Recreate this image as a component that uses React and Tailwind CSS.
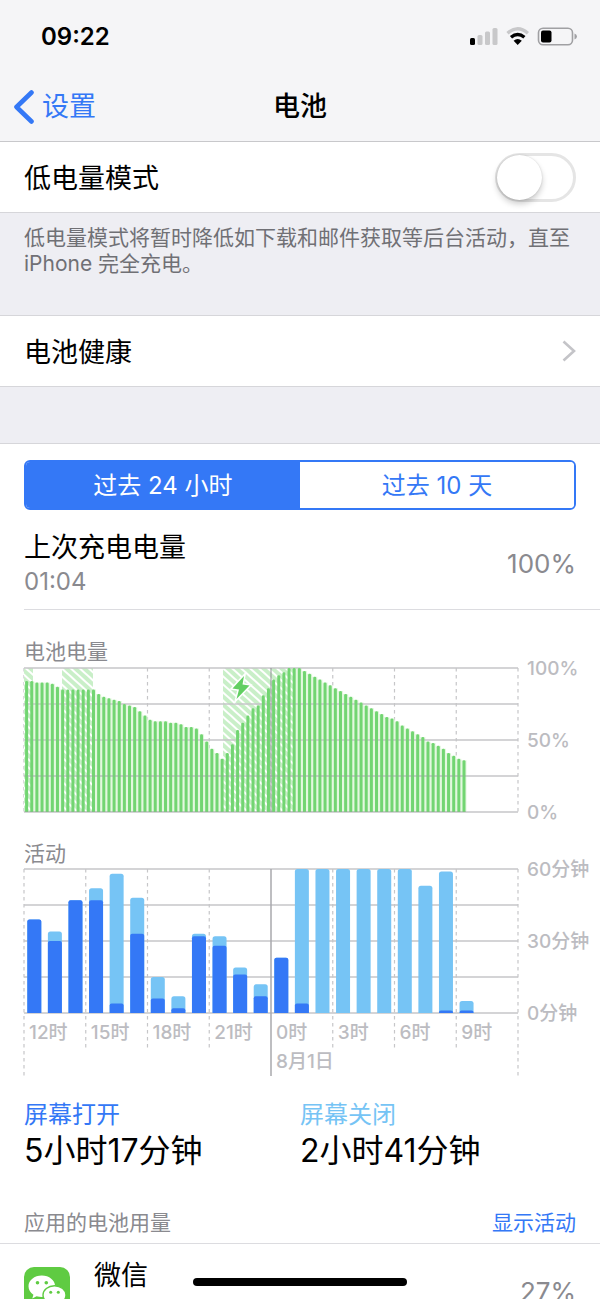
import React, { useState } from "react";

const FONT =
  "font-['Inter','Noto_Sans_CJK_SC',sans-serif]";

const PLOT_W = 494;
const PLOT_H = 144;
const HOUR_W = PLOT_W / 24;

// Charge level in percent, one value per quarter of an hour.
const LEVELS = [
  91, 91, 90, 90, 90, 89, 87, 85, 85, 85, 85, 85, 85, 85, 82, 80, 79, 78, 77,
  75, 74, 73, 70, 67, 64, 63, 63, 63, 62, 62, 61, 59, 59, 58, 54, 49, 44, 41,
  37, 41, 47, 57, 62, 67, 72, 74, 81, 86, 92, 95, 97, 100, 100, 100, 98, 96,
  94, 92, 90, 88, 86, 84, 82, 80, 78, 76, 74, 72, 70, 68, 66, 65, 63, 60, 58,
  56, 54, 52, 49, 48, 46, 44, 41, 39, 37, 36,
];

// Charging periods as [start, end] along the plot width.
const CHARGING = [
  [0, 9],
  [38, 69],
  [199, 269],
];

// Minutes per hour: [total, screen on].
const ACTIVITY = [
  [39, 39], [34, 30], [47, 47], [52, 47], [58, 4], [48, 33], [15, 6], [7, 2],
  [33, 32], [32, 28], [19, 16], [12, 7], [23, 23], [60, 4], [60, 0], [60, 0],
  [60, 0], [60, 0], [60, 0], [53, 0], [59, 1], [5, 1],
];

const HOURS = ["12时", "15时", "18时", "21时", "0时", "3时", "6时", "9时"];

function topRounded(x, y, w, h, r) {
  const q = Math.min(r, h);
  return `M${x} ${y + h}V${y + q}Q${x} ${y} ${x + q} ${y}H${x + w - q}Q${x + w} ${y} ${x + w} ${y + q}V${y + h}Z`;
}

function GridRows() {
  return [0, 1, 2, 3, 4].map((i) => (
    <line key={i} x1="0" x2={PLOT_W} y1={i * 36} y2={i * 36} stroke="#c6c6c8" strokeWidth="1.3" />
  ));
}

function GridColumns({ inner, outer }) {
  return [0, 1, 2, 3, 4, 5, 6, 7, 8].map((i) => {
    const x = (i * PLOT_W) / 8;
    if (i === 4) return null;
    return (
      <line
        key={i}
        x1={x}
        x2={x}
        y1="0"
        y2={i === 0 || i === 8 ? outer : inner}
        stroke="#c6c6c8"
        strokeWidth="1.2"
        strokeDasharray="3.5 3.5"
      />
    );
  });
}

function AxisLabels({ labels }) {
  return labels.map((t, i) => (
    <text key={t} x="503" y={i * 72 + 7} className="fill-[#bcbcc1] text-[19px] font-medium">
      {t}
    </text>
  ));
}

function BatteryChart() {
  const step = PLOT_W / 96;
  const y = (p) => PLOT_H * (1 - p / 100);
  const area =
    LEVELS.map((p, i) => `${i ? "L" : "M"}${i * step} ${y(p)}H${(i + 1) * step}`).join("") +
    `V${PLOT_H}H0Z`;
  return (
    <svg viewBox="0 0 576 144" className="block w-full overflow-visible" role="img" aria-label="电池电量">
      <defs>
        <pattern id="hatch" width="6" height="6" patternUnits="userSpaceOnUse" patternTransform="rotate(-48)">
          <rect width="6" height="6" fill="#c9efc8" />
          <rect width="2" height="6" fill="#ffffff" />
        </pattern>
      </defs>
      <GridColumns inner={144} outer={144} />
      <path d={area} fill="#e3f8df" />
      {CHARGING.map(([a, b]) => (
        <rect key={a} x={a} y="0" width={b - a} height={PLOT_H} fill="url(#hatch)" />
      ))}
      <GridRows />
      {LEVELS.map((p, i) => (
        <path
          key={i}
          d={topRounded(i * step + 1.1, y(p), 3, PLOT_H - y(p), 1.4)}
          fill="#72d572"
        />
      ))}
      <g stroke="#9c9ca0" strokeOpacity="0.25" strokeWidth="1">
        <line x1="0" x2="442" y1="108" y2="108" />
        <line x1="0" x2="442" y1="143.5" y2="143.5" />
      </g>
      <line x1="247" x2="247" y1="0" y2="144" stroke="#8e8e93" strokeOpacity="0.65" strokeWidth="1.5" />
      <path
        d="M220 8L208.500 20.500L215 21.500L212.500 31L225.500 17.500L218.500 16.500Z"
        fill="#62cf62"
        stroke="#ffffff"
        strokeWidth="3"
        paintOrder="stroke"
      />
      <AxisLabels labels={["100%", "50%", "0%"]} />
    </svg>
  );
}

function ActivityChart() {
  const h = (m) => (PLOT_H * m) / 60;
  return (
    <svg viewBox="0 0 576 207" className="block w-full overflow-visible" role="img" aria-label="活动">
      <GridRows />
      <GridColumns inner={180} outer={207} />
      {ACTIVITY.map(([total, on], i) => {
        const x = i * HOUR_W + 3.3;
        return (
          <g key={i}>
            <path d={topRounded(x, PLOT_H - h(total), 14, h(total), 2.5)} fill="#76c4f5" />
            {on > 0 && (
              <path d={topRounded(x, PLOT_H - h(on), 14, h(on), 2)} fill="#3478f6" />
            )}
          </g>
        );
      })}
      <line x1="247" x2="247" y1="0" y2="207" stroke="#a9a9ad" strokeWidth="1.5" />
      {HOURS.map((t, i) => (
        <text key={t} x={(i * PLOT_W) / 8 + 5} y="170" className="fill-[#bcbcc1] text-[19px] font-medium">
          {t}
        </text>
      ))}
      <text x="252" y="199" className="fill-[#bcbcc1] text-[19px] font-medium">8月1日</text>
      <AxisLabels labels={["60分钟", "30分钟", "0分钟"]} />
    </svg>
  );
}

function StatusIcons() {
  return (
    <svg width="107" height="20" viewBox="0 0 107 20" aria-hidden="true">
      <rect x="0" y="11" width="5" height="7" rx="1.5" fill="#000" />
      <g fill="#c8c8ca">
        <rect x="7.5" y="8" width="5" height="10" rx="1.5" />
        <rect x="15" y="4.5" width="5" height="13.5" rx="1.5" />
        <rect x="22.5" y="1" width="5" height="17" rx="1.5" />
      </g>
      <path d="M37.5 6.2Q47.7 -2.6 57.9 6.2" fill="none" stroke="#c8c8ca" strokeWidth="3.4" />
      <path d="M41 10.2Q47.7 4.6 54.4 10.2" fill="none" stroke="#000" strokeWidth="3.4" />
      <path d="M43.6 13.8Q47.7 10.4 51.8 13.8L47.7 18Z" fill="#000" />
      <rect x="68.5" y="1.2" width="34" height="16.6" rx="4.5" fill="none" stroke="#a0a0a3" strokeWidth="1.6" />
      <rect x="71" y="3.6" width="10.5" height="11.8" rx="2" fill="#000" />
      <path d="M104.5 6.5Q107 7.5 107 9.5T104.5 12.5Z" fill="#a0a0a3" />
    </svg>
  );
}

function WeChatIcon() {
  return (
    <svg viewBox="0 0 46 46" className="mt-[9px] size-[46px] shrink-0" aria-hidden="true">
      <rect width="46" height="46" rx="10" fill="#5fcb42" />
      <path
        d="M17.8 8.5C10.4 8.5 4.5 13.3 4.5 19.3C4.5 22.7 6.4 25.7 9.4 27.7L8.3 31.5L12.6 29.3C14.2 29.8 16 30.1 17.8 30.1C25.2 30.1 31.1 25.3 31.1 19.3S25.2 8.5 17.8 8.5Z"
        fill="#fff"
      />
      <path
        d="M30.5 18.8C24.1 18.8 19 23 19 28.1S24.1 37.5 30.5 37.5C31.9 37.5 33.3 37.3 34.6 36.9L38.3 38.9L37.4 35.6C40.2 33.9 42 31.2 42 28.1C42 23 36.9 18.8 30.5 18.8Z"
        fill="#fff"
        stroke="#5fcb42"
        strokeWidth="1.4"
      />
      <g fill="#5fcb42">
        <circle cx="13.5" cy="15.8" r="1.8" />
        <circle cx="22.3" cy="15.8" r="1.8" />
        <circle cx="26.7" cy="25.2" r="1.5" />
        <circle cx="34.3" cy="25.2" r="1.5" />
      </g>
    </svg>
  );
}

const RANGES = ["过去 24 小时", "过去 10 天"];

export default function App() {
  const [range, setRange] = useState(0);
  const [lowPower, setLowPower] = useState(false);

  return (
    <div className={`${FONT} flex h-screen flex-col overflow-hidden bg-white text-black`}>
      <header className="shrink-0 border-b border-[#c8c8cb] bg-[#f5f5f7]">
        <div className="flex h-[72px] items-center justify-between pt-0.5 pr-[23px] pl-[41px]">
          <time className="text-[24px] font-semibold">09:22</time>
          <StatusIcons />
        </div>
        <div className="grid h-[69px] grid-cols-3 items-center px-3.5">
          <a href="#settings" className="flex items-center gap-2 text-[27px] leading-9 text-[#3478f6]">
            <svg width="20" height="34" viewBox="0 0 20 34" fill="none" aria-hidden="true">
              <path d="M17.5 2.5L2.5 17L17.5 31.5" stroke="#3478f6" strokeWidth="4.6" strokeLinecap="round" strokeLinejoin="round" />
            </svg>
            设置
          </a>
          <h1 className="text-center text-[27px] leading-9 font-medium">电池</h1>
        </div>
      </header>

      <main className="min-h-0 flex-1 overflow-y-auto [scrollbar-width:none]">
        <div className="flex h-[71px] items-center justify-between border-b border-[#d6d6da] px-6">
          <label htmlFor="low-power" className="pt-1 text-[27px] leading-9">低电量模式</label>
          <span className="relative flex">
            <input
              id="low-power"
              type="checkbox"
              role="switch"
              checked={lowPower}
              onChange={(e) => setLowPower(e.target.checked)}
              className="peer h-[49px] w-[81px] cursor-pointer appearance-none rounded-full border-[3px] border-[#e5e5e5] bg-white checked:border-[#4cd964] checked:bg-[#4cd964]"
            />
            <span className="pointer-events-none absolute top-0.5 left-0.5 size-[45px] rounded-full bg-white shadow-[0_4px_6px_rgba(0,0,0,0.2),0_0_2px_rgba(0,0,0,0.15)] peer-checked:translate-x-8" />
          </span>
        </div>

        <p className="h-[103px] border-b border-[#d6d6da] bg-[#eeeef3] px-6 pt-3 text-[21px] leading-[26px] text-[#707075]">
          低电量模式将暂时降低如下载和邮件获取等后台活动，直至 iPhone 完全充电。
        </p>

        <a href="#health" className="flex h-[71px] items-center justify-between border-b border-[#d6d6da] px-6 text-[27px] leading-9">
          <span className="pt-1">电池健康</span>
          <svg width="14" height="22" viewBox="0 0 14 22" fill="none" aria-hidden="true">
            <path d="M1.5 1.5L12 11L1.5 20.5" stroke="#c4c4c8" strokeWidth="2.6" />
          </svg>
        </a>

        <div className="h-[57px] border-b border-[#d6d6da] bg-[#eeeef3]" />

        <section className="px-6 pt-4">
          <div className="flex h-[50px] overflow-hidden rounded-md border-2 border-[#3478f6]">
            {RANGES.map((t, i) => (
              <button
                key={t}
                type="button"
                aria-pressed={range === i}
                onClick={() => setRange(i)}
                className={
                  range === i
                    ? "flex-1 bg-[#3478f6] pt-0.5 text-[24px] text-white"
                    : "flex-1 bg-white pt-0.5 text-[24px] text-[#3478f6]"
                }
              >
                {t}
              </button>
            ))}
          </div>
        </section>

        <section className="pl-6">
          <div className="flex h-[100px] items-center justify-between border-b border-[#dcdce0] pt-2 pr-6">
            <div>
              <h2 className="text-[27px] leading-9">上次充电电量</h2>
              <p className="text-[24px] leading-8 text-[#8a8a8f]">01:04</p>
            </div>
            <p className="text-[26px] leading-10 text-[#8a8a8f]">100%</p>
          </div>

          <h3 className="mt-7 text-[21px] leading-7 text-[#8a8a8f]">电池电量</h3>
          <div className="mt-0.5">
            <BatteryChart />
          </div>

          <h3 className="mt-7 text-[21px] leading-7 text-[#8a8a8f]">活动</h3>
          <div className="mt-px">
            <ActivityChart />
          </div>
        </section>

        <dl className="mt-[23px] grid grid-cols-2 px-6">
          <div>
            <dt className="text-[24px] leading-8 text-[#3478f6]">屏幕打开</dt>
            <dd className="text-[32px] leading-10">5小时17分钟</dd>
          </div>
          <div>
            <dt className="text-[24px] leading-8 text-[#76c4f5]">屏幕关闭</dt>
            <dd className="text-[32px] leading-10">2小时41分钟</dd>
          </div>
        </dl>

        <div className="mt-9 flex items-center justify-between border-b border-[#dcdce0] px-6 pb-1 text-[21px] leading-8">
          <h3 className="text-[#8a8a8f]">应用的电池用量</h3>
          <button type="button" className="text-[#3478f6]">显示活动</button>
        </div>

        <div className="flex items-start gap-6 px-6 pt-3.5 pb-5">
          <WeChatIcon />
          <div className="flex-1">
            <p className="text-[27px] leading-9">微信</p>
            <p className="text-[21px] leading-8 text-[#8a8a8f]">后台活动</p>
          </div>
          <p className="mt-3.5 text-[26px] leading-10 text-[#8a8a8f]">27%</p>
        </div>
      </main>

      <div className="pointer-events-none absolute bottom-[13px] left-1/2 h-2 w-[214px] -translate-x-1/2 rounded-full bg-black" />
    </div>
  );
}
